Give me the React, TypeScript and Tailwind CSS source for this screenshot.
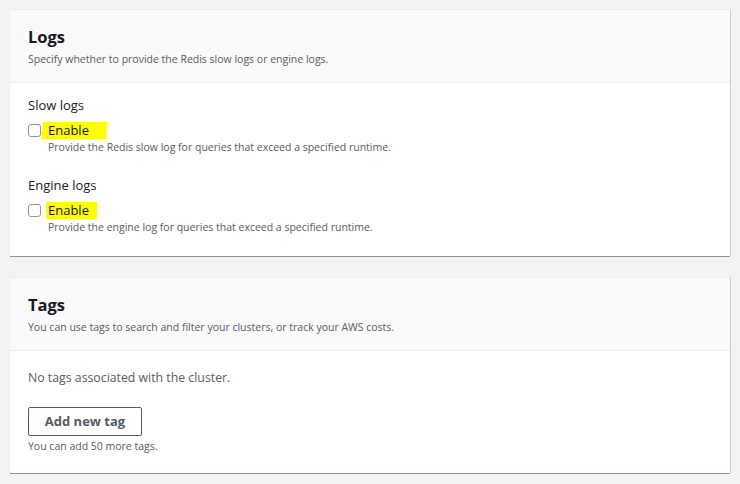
export default function App() {
  const font = { fontFamily: '"Open Sans", "Noto Sans", sans-serif' };
  return (
    <div className="w-[740px] h-[484px] bg-[#f2f3f3] pt-[9px] pl-[10px] pr-[10px] text-[#16191f]" style={font}>
      <section className="bg-white border-t border-[#eaeded] shadow-[0_1px_0_0_#879596,1px_0_0_0_#c5cccc]">
        <div className="bg-[#fafafa] border-b border-[#eaeded] px-[18px] pt-[16px] h-[73px]">
          <h2 className="text-[16.5px] font-bold leading-[22px]">Logs</h2>
          <p className="text-[10.5px] leading-[16px] text-[#545b64] mt-[3px]">Specify whether to provide the Redis slow logs or engine logs.</p>
        </div>
        <div className="px-[18px] pt-[13px] pb-[21px]">
          <div className="text-[13px] leading-[18px]">Slow logs</div>
          <label className="flex items-center mt-[7px] h-[18px]">
            <span className="w-[13px] h-[13px] border border-[#8d9799] rounded-[3px] bg-white" />
            <span className="relative ml-[1px] text-[13px] leading-[17px] pl-[6px] pr-[18px]">
              <span className="absolute inset-0 bg-[#ffff00] -skew-x-6" />
              <span className="relative">Enable</span>
            </span>
          </label>
          <p className="pl-[20px] text-[10.5px] leading-[16px] text-[#545b64]">Provide the Redis slow log for queries that exceed a specified runtime.</p>
          <div className="text-[13px] leading-[18px] mt-[21px]">Engine logs</div>
          <label className="flex items-center mt-[7px] h-[18px]">
            <span className="w-[13px] h-[13px] border border-[#8d9799] rounded-[3px] bg-white" />
            <span className="ml-[5px] text-[13px] leading-[17px] bg-[#ffff00] pl-[2px] pr-[8px]">Enable</span>
          </label>
          <p className="pl-[20px] text-[10.5px] leading-[16px] text-[#545b64]">Provide the engine log for queries that exceed a specified runtime.</p>
        </div>
      </section>
      <section className="bg-white border-t border-[#eaeded] shadow-[0_1px_0_0_#879596,1px_0_0_0_#c5cccc] mt-[21px]">
        <div className="bg-[#fafafa] border-b border-[#eaeded] px-[18px] pt-[16px] h-[73px]">
          <h2 className="text-[16.5px] font-bold leading-[22px]">Tags</h2>
          <p className="text-[10.5px] leading-[16px] text-[#545b64] mt-[3px]">You can use tags to search and filter your clusters, or track your AWS costs.</p>
        </div>
        <div className="px-[18px] pt-[18px] pb-[19px]">
          <p className="text-[12.3px] leading-[18px] text-[#545b64]">No tags associated with the cluster.</p>
          <button className="mt-[20px] w-[114px] h-[29px] border border-[#545b64] rounded-[2px] text-[13px] font-bold text-[#545b64] bg-white">Add new tag</button>
          <p className="text-[10.5px] leading-[16px] text-[#545b64] mt-[2px]">You can add 50 more tags.</p>
        </div>
      </section>
    </div>
  );
}
